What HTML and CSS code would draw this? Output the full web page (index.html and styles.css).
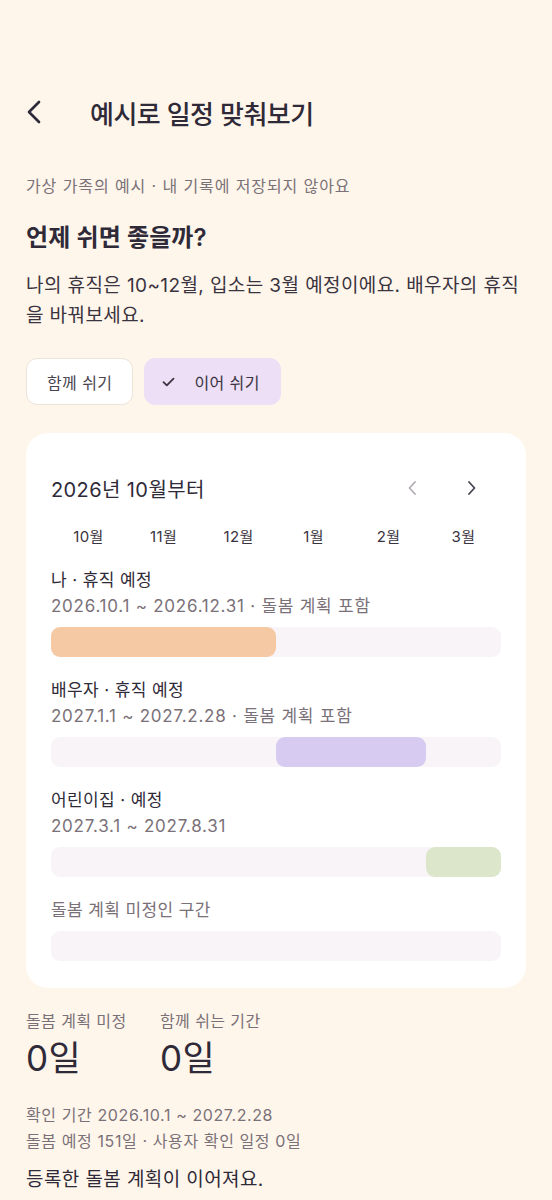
FILE: index.html
```html
<!DOCTYPE html>
<html lang="ko">
<head>
    <meta charset="UTF-8">
    <meta name="viewport" content="width=device-width, initial-scale=1.0">
    <title>예시로 일정 맞춰보기</title>
    <link rel="stylesheet" href="styles.css">
</head>
<body>

    <!-- 상단 -->
    <div class="top-bar">
        <button class="back-btn" aria-label="뒤로">
            <svg width="16" height="24" viewBox="0 0 16 24"><path d="M13 2 L3 12 L13 22" fill="none" stroke="#2f2a38" stroke-width="2.7" stroke-linecap="round" stroke-linejoin="round"/></svg>
        </button>
        <h1>예시로 일정 맞춰보기</h1>
    </div>

    <div class="page">
        <p class="note">가상 가족의 예시 · 내 기록에 저장되지 않아요</p>
        <h2>언제 쉬면 좋을까?</h2>
        <p class="desc">나의 휴직은 10~12월, 입소는 3월 예정이에요. 배우자의 휴직을 바꿔보세요.</p>

        <div class="choice-row">
            <button class="choice">함께 쉬기</button>
            <button class="choice selected">
                <svg width="13" height="10" viewBox="0 0 13 10"><path d="M1.5 5.2 L4.8 8.4 L11.5 1.6" fill="none" stroke="#3a3340" stroke-width="1.8" stroke-linecap="round" stroke-linejoin="round"/></svg>
                이어 쉬기
            </button>
        </div>

        <!-- 일정 카드 -->
        <div class="card">
            <div class="card-head">
                <span class="card-title">2026년 10월부터</span>
                <div class="nav">
                    <svg width="10" height="16" viewBox="0 0 10 16"><path d="M8 2 L2.5 8 L8 14" fill="none" stroke="#b3adb3" stroke-width="1.8" stroke-linecap="round" stroke-linejoin="round"/></svg>
                    <svg width="10" height="16" viewBox="0 0 10 16"><path d="M2 2 L7.5 8 L2 14" fill="none" stroke="#4a4450" stroke-width="1.8" stroke-linecap="round" stroke-linejoin="round"/></svg>
                </div>
            </div>

            <div class="rows">
                <div class="months">
                    <span>10월</span><span>11월</span><span>12월</span><span>1월</span><span>2월</span><span>3월</span>
                </div>

                <div class="row">
                    <div class="row-label">나 · 휴직 예정</div>
                    <div class="row-date">2026.10.1 ~ 2026.12.31 · 돌봄 계획 포함</div>
                    <div class="track"><div class="fill me"></div></div>
                </div>

                <div class="row">
                    <div class="row-label">배우자 · 휴직 예정</div>
                    <div class="row-date">2027.1.1 ~ 2027.2.28 · 돌봄 계획 포함</div>
                    <div class="track"><div class="fill spouse"></div></div>
                </div>

                <div class="row">
                    <div class="row-label">어린이집 · 예정</div>
                    <div class="row-date">2027.3.1 ~ 2027.8.31</div>
                    <div class="track"><div class="fill daycare"></div></div>
                </div>

                <div class="row">
                    <div class="row-hint">돌봄 계획 미정인 구간</div>
                    <div class="track"></div>
                </div>
            </div>
        </div>

        <!-- 요약 -->
        <div class="stats">
            <div class="stat">
                <div class="stat-label">돌봄 계획 미정</div>
                <div class="stat-value">0일</div>
            </div>
            <div class="stat">
                <div class="stat-label">함께 쉬는 기간</div>
                <div class="stat-value">0일</div>
            </div>
        </div>

        <p class="info">확인 기간 2026.10.1 ~ 2027.2.28<br>돌봄 예정 151일 · 사용자 확인 일정 0일</p>
        <p class="result">등록한 돌봄 계획이 이어져요.</p>
    </div>

</body>
</html>
```

FILE: styles.css
```css
body {
    font-family: Inter, "Noto Sans CJK KR", sans-serif;
    background-color: #fff6eb;
    color: #302a36;
    margin: 0;
    letter-spacing: 0.4px;
}

p, h1, h2 {
    margin: 0;
}

button {
    font-family: inherit;
    letter-spacing: inherit;
    cursor: pointer;
}

.top-bar {
    display: flex;
    align-items: center;
    height: 48px;
    margin-top: 88px;
    padding-left: 26px;
}

.back-btn {
    display: flex;
    align-items: center;
    background: none;
    border: none;
    padding: 0;
    width: 64px;
}

.top-bar h1 {
    font-size: 26px;
    font-weight: 500;
    letter-spacing: -0.5px;
    color: #2f2a38;
}

.page {
    padding: 0 26px;
}

.note {
    margin-top: 39px;
    font-size: 16px;
    line-height: 22px;
    letter-spacing: 0.9px;
    color: #7a7178;
}

h2 {
    margin-top: 26px;
    font-size: 24px;
    line-height: 30px;
    font-weight: 600;
    letter-spacing: 0.1px;
    color: #2f2a38;
}

.desc {
    margin-top: 18px;
    font-size: 19px;
    line-height: 30px;
    color: #3a3340;
}

.choice-row {
    display: flex;
    gap: 11px;
    margin-top: 27px;
}

.choice {
    display: flex;
    align-items: center;
    gap: 19px;
    height: 47px;
    padding: 0 20px;
    font-size: 16px;
    color: #4a4450;
    background-color: #ffffff;
    border: 1.5px solid #ece3d9;
    border-radius: 11px;
}

.choice.selected {
    padding-left: 17px;
    background-color: #ecdff6;
    border-color: #ecdff6;
    color: #3a3340;
}

.card {
    margin-top: 28px;
    background-color: #ffffff;
    border-radius: 22px;
    padding: 40px 25px 27px;
}

.card-head {
    display: flex;
    align-items: center;
    justify-content: space-between;
    height: 30px;
}

.card-title {
    font-size: 20px;
    color: #2f2a38;
}

.nav {
    display: flex;
    gap: 50px;
    padding-right: 24px;
}

.rows {
    display: flex;
    flex-direction: column;
    gap: 20px;
    margin-top: 24px;
}

.months {
    display: grid;
    grid-template-columns: repeat(6, 1fr);
    text-align: center;
    font-size: 15px;
    line-height: 20px;
    color: #3a3340;
}

.row-label {
    font-size: 17px;
    line-height: 26px;
    color: #2f2a38;
}

.row-date {
    font-size: 17px;
    line-height: 26px;
    letter-spacing: 0.75px;
    color: #7a7178;
}

.row-hint {
    font-size: 17px;
    line-height: 26px;
    color: #7a7178;
}

.track {
    display: grid;
    grid-template-columns: repeat(6, 1fr);
    height: 30px;
    margin-top: 8px;
    border-radius: 9px;
    background-color: #f8f4f8;
}

.fill {
    border-radius: 9px;
}

.fill.me {
    grid-column: 1 / 4;
    background-color: #f6c9a5;
}

.fill.spouse {
    grid-column: 4 / 6;
    background-color: #d8cbf2;
}

.fill.daycare {
    grid-column: 6 / 7;
    background-color: #dce6cb;
}

.stats {
    display: flex;
    margin-top: 22px;
}

.stat {
    width: 134px;
}

.stat-label {
    font-size: 16px;
    line-height: 22px;
    color: #7a7178;
}

.stat-value {
    margin-top: 6px;
    font-size: 35px;
    line-height: 40px;
    color: #2f2a38;
}

.info {
    margin-top: 24px;
    font-size: 16px;
    line-height: 26px;
    letter-spacing: 0.6px;
    color: #7a7178;
}

.result {
    margin-top: 12px;
    font-size: 19px;
    line-height: 28px;
    color: #2f2a38;
}
```
